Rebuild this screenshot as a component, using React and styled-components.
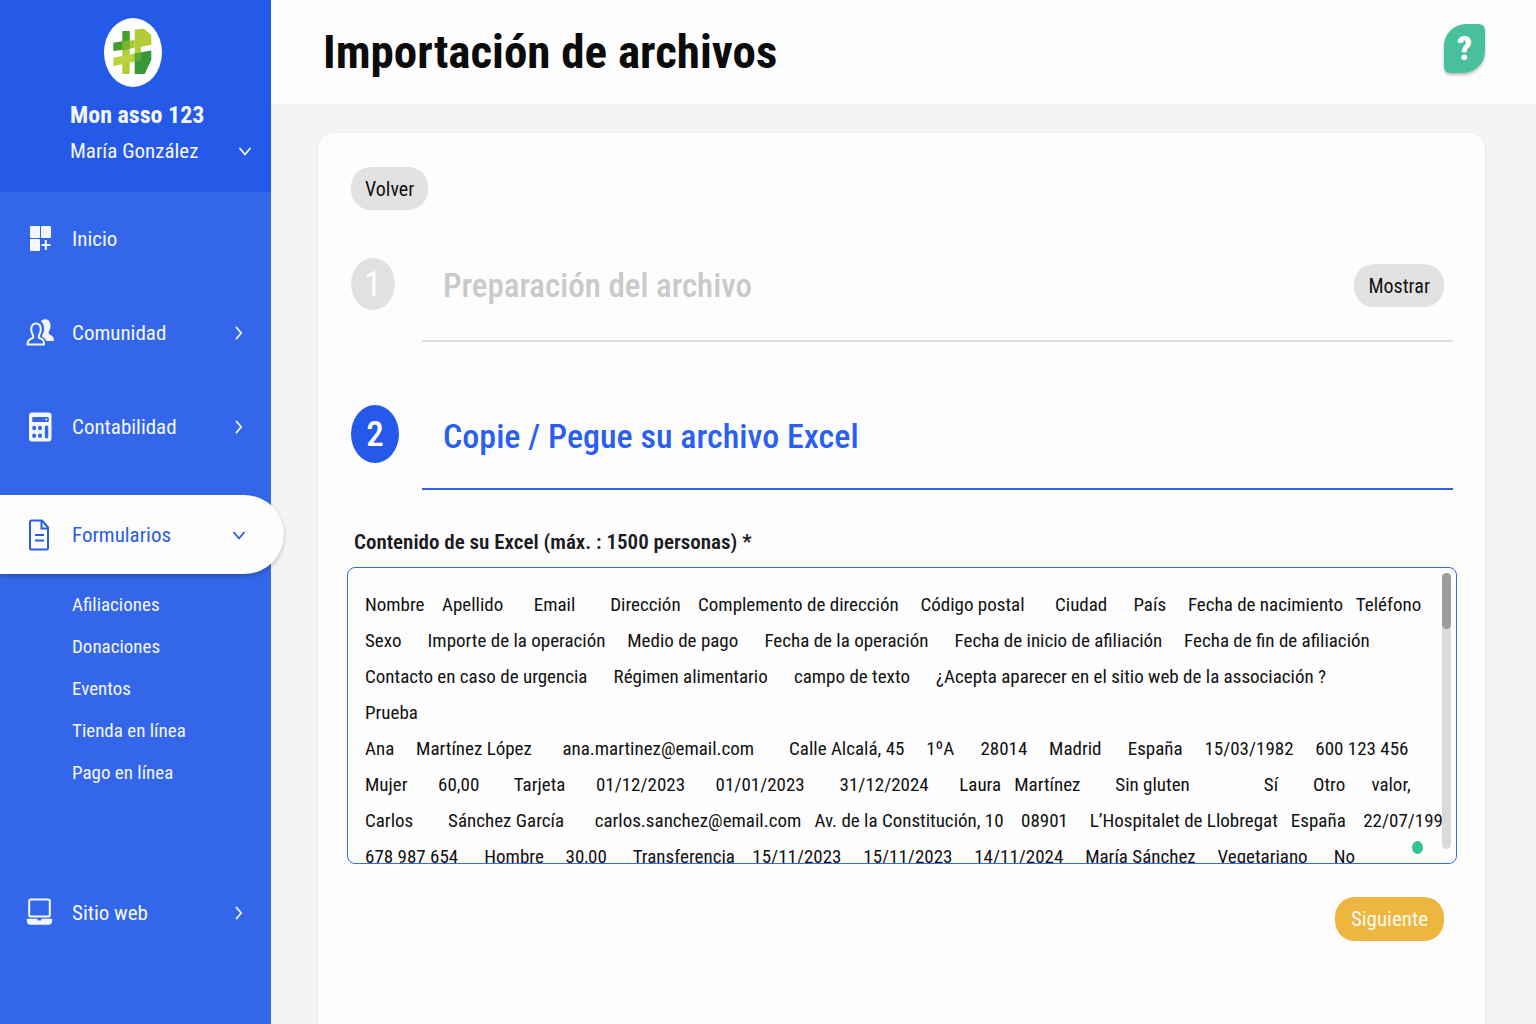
import React, { useState } from 'react'
import styled, { createGlobalStyle, css } from 'styled-components'

const GlobalStyle = createGlobalStyle`
  *, *::before, *::after {
    box-sizing: border-box;
  }
  body {
    margin: 0;
    background: #f4f4f4;
    color: #111;
    font-family: 'Roboto Condensed', Roboto, 'Liberation Sans', sans-serif;
    font-size: 19px;
  }
  button, textarea {
    font-family: inherit;
  }
`

const Page = styled.div`
  display: flex;
  min-height: 100vh;
`

const Sidebar = styled.aside`
  position: relative;
  z-index: 1;
  flex: 0 0 271px;
  background: #3366e8;
  color: #f4f7ff;
`

const Account = styled.div`
  display: flex;
  flex-direction: column;
  height: 192px;
  padding: 18px 19px 0 70px;
  background: #255ae8;
`

const Logo = styled.svg`
  display: block;
  width: 58px;
  height: 69px;
  margin-left: 34px;
`

const AssoName = styled.strong`
  margin-top: 12px;
  font-size: 24px;
  line-height: 32px;
`

const UserButton = styled.button`
  display: flex;
  align-items: center;
  justify-content: space-between;
  margin-top: 4px;
  padding: 0;
  border: 0;
  background: none;
  color: inherit;
  font-size: 21px;
  line-height: 32px;
  cursor: pointer;
`

const Nav = styled.nav`
  display: flex;
  flex-direction: column;
  gap: 15px;
  padding-top: 7px;
`

const NavGroup = styled.div`
  margin: 14px 0 64px;
`

const NavLink = styled.a`
  display: flex;
  align-items: center;
  gap: 18px;
  height: 79px;
  padding: 0 25px 0 26px;
  color: inherit;
  font-size: 21px;
  text-decoration: none;
  ${props => props.$active && css`
    margin-right: -13px;
    padding-right: 38px;
    border-radius: 0 40px 40px 0;
    background: #fdfdfd;
    color: #2a5ce8;
    box-shadow: 0 2px 4px rgba(0, 0, 0, 0.22);
  `}
`

const NavLabel = styled.span`
  flex: 1;
`

const NavIcon = styled.svg`
  width: 28px;
  height: 32px;
  fill: none;
  stroke: currentColor;
  stroke-width: 2;
`

const Chevron = styled.svg`
  width: 14px;
  height: 14px;
  fill: none;
  stroke: currentColor;
  stroke-width: 1.8;
  stroke-linecap: round;
  stroke-linejoin: round;
`

const SubNav = styled.div`
  display: flex;
  flex-direction: column;
  padding: 10px 0 0 72px;
`

const SubLink = styled.a`
  color: inherit;
  font-size: 19px;
  line-height: 42px;
  text-decoration: none;
`

const Main = styled.main`
  display: flex;
  flex: 1;
  flex-direction: column;
  min-width: 0;
`

const Header = styled.header`
  display: flex;
  align-items: center;
  justify-content: space-between;
  height: 104px;
  padding: 0 51px 0 52px;
  background: #fdfdfd;
`

const Title = styled.h1`
  margin: 0;
  color: #0b0b0b;
  font-size: 47px;
  line-height: 56px;
`

const HelpButton = styled.button`
  width: 41px;
  height: 49px;
  margin-bottom: 8px;
  padding: 0;
  border: 0;
  border-radius: 22px 6px 22px 6px;
  background: #48c09c;
  box-shadow: 0 2px 3px rgba(0, 0, 0, 0.25);
  color: #fff;
  font-size: 33px;
  font-weight: 900;
  cursor: pointer;
`

const Card = styled.section`
  flex: 1;
  margin: 29px 51px 0 47px;
  padding: 34px 28px 40px 29px;
  border-radius: 16px 16px 0 0;
  background: #fdfdfd;
  box-shadow: 0 1px 3px rgba(0, 0, 0, 0.12);
`

const Steps = styled.div`
  padding: 0 4px;
`

const Button = styled.button`
  height: ${props => (props.$primary ? 44 : 43)}px;
  padding: 0 ${props => (props.$primary ? 16 : 14)}px;
  border: 0;
  border-radius: 20px;
  background: ${props => (props.$primary ? '#edb63e' : '#e2e2e2')};
  color: ${props => (props.$primary ? '#fffaf0' : '#111')};
  font-size: ${props => (props.$primary ? 21 : 20)}px;
  cursor: pointer;
`

const Step = styled.div`
  display: flex;
  align-items: stretch;
  height: ${props => (props.$active ? 112 : 116)}px;
  margin-top: ${props => (props.$active ? 36 : 16)}px;
  color: ${props => (props.$active ? '#2b5fee' : '#c9c9c9')};
`

const StepMark = styled.div`
  display: flex;
  align-items: center;
  flex: 0 0 71px;
`

const StepNumber = styled.span`
  display: flex;
  align-items: center;
  justify-content: center;
  width: ${props => (props.$active ? 48 : 44)}px;
  height: ${props => (props.$active ? 58 : 52)}px;
  border-radius: 50%;
  background: ${props => (props.$active ? '#2459ea' : '#e1e1e1')};
  color: #fff;
  font-size: 35px;
  font-weight: ${props => (props.$active ? 500 : 400)};
`

const StepBody = styled.div`
  display: flex;
  flex: 1;
  align-items: center;
  justify-content: space-between;
  padding: 5px 9px 0 21px;
  border-bottom: 2px solid ${props => (props.$active ? '#2f62ea' : '#dedede')};
`

const StepTitle = styled.h2`
  margin: 0;
  font-size: ${props => (props.$active ? 34 : 33)}px;
  font-weight: 500;
`

const Label = styled.label`
  display: block;
  margin: 38px 0 11px 7px;
  color: #1b1b22;
  font-size: 21px;
  font-weight: 600;
  line-height: 28px;
`

const Field = styled.div`
  position: relative;
  display: flex;
  height: 297px;
  padding-right: 5px;
  border: 1px solid #3a69ec;
  border-radius: 8px;
  overflow: hidden;
`

const TextArea = styled.textarea`
  flex: 1;
  min-width: 0;
  padding: 19px 0 0 17px;
  border: 0;
  outline: 0;
  background: transparent;
  color: #111;
  font-size: 19px;
  line-height: 36px;
  white-space: pre;
  resize: none;
  overflow: hidden;
`

const ScrollTrack = styled.div`
  width: 9px;
  margin: 5px 0 14px;
  border-radius: 5px;
  background: #dadada;
`

const ScrollThumb = styled.div`
  height: 56px;
  border-radius: 5px;
  background: #9c9c9c;
`

const StatusDot = styled.span`
  position: absolute;
  right: 33px;
  bottom: 9px;
  width: 11px;
  height: 13px;
  border-radius: 50%;
  background: #37c193;
`

const Actions = styled.div`
  display: flex;
  justify-content: flex-end;
  margin-top: 33px;
  padding-right: 13px;
`

// Each row is a list of [spaces before, value]
const rows = [
  [[0, 'Nombre'], [4, 'Apellido'], [7, 'Email'], [8, 'Dirección'], [4, 'Complemento de dirección'], [5, 'Código postal'], [7, 'Ciudad'], [6, 'País'], [5, 'Fecha de nacimiento'], [3, 'Teléfono']],
  [[0, 'Sexo'], [6, 'Importe de la operación'], [5, 'Medio de pago'], [6, 'Fecha de la operación'], [6, 'Fecha de inicio de afiliación'], [5, 'Fecha de fin de afiliación']],
  [[0, 'Contacto en caso de urgencia'], [6, 'Régimen alimentario'], [6, 'campo de texto'], [6, '¿Acepta aparecer en el sitio web de la associación ?']],
  [[0, 'Prueba']],
  [[0, 'Ana'], [5, 'Martínez López'], [7, 'ana.martinez@email.com'], [8, 'Calle Alcalá, 45'], [5, '1ºA'], [6, '28014'], [5, 'Madrid'], [6, 'España'], [5, '15/03/1982'], [5, '600 123 456']],
  [[0, 'Mujer'], [7, '60,00'], [8, 'Tarjeta'], [7, '01/12/2023'], [7, '01/01/2023'], [8, '31/12/2024'], [7, 'Laura'], [3, 'Martínez'], [8, 'Sin gluten'], [17, 'Sí'], [8, 'Otro'], [6, 'valor,']],
  [[0, 'Carlos'], [8, 'Sánchez García'], [7, 'carlos.sanchez@email.com'], [3, 'Av. de la Constitución, 10'], [4, '08901'], [5, 'L’Hospitalet de Llobregat'], [3, 'España'], [4, '22/07/199']],
  [[0, '678 987 654'], [6, 'Hombre'], [5, '30,00'], [6, 'Transferencia'], [4, '15/11/2023'], [5, '15/11/2023'], [5, '14/11/2024'], [5, 'María Sánchez'], [5, 'Vegetariano'], [6, 'No']]
]

const initialContent = rows
  .map(row => row.map(([spaces, value]) => ' '.repeat(spaces) + value).join(''))
  .join('\n')

const ChevronDown = () =>
  <Chevron viewBox="0 0 14 14" aria-hidden="true">
    <path d="M2 4.500l5 6 5-6" />
  </Chevron>

const ChevronRight = () =>
  <Chevron viewBox="0 0 14 14" aria-hidden="true">
    <path d="M4.500 1.500l4.700 5.500-4.700 5.500" />
  </Chevron>

const HomeIcon = () =>
  <NavIcon viewBox="0 0 28 32" aria-hidden="true">
    <g fill="currentColor" stroke="none">
      <rect x="4" y="3" width="10" height="12" rx="1" />
      <rect x="15" y="3" width="10" height="12" rx="1" />
      <rect x="4" y="16" width="10" height="12" rx="1" />
    </g>
    <path d="M19.800 17v10M15.500 22h9" />
  </NavIcon>

const PeopleIcon = () =>
  <NavIcon viewBox="0 0 28 32" aria-hidden="true">
    <path
      fill="currentColor"
      stroke="none"
      d="M14.800 4.200C16 2.800 17.800 2.200 19.500 2.300c3.200.2 5 2.700 5 6 0 3-.6 4.700-1.700 6.400-.5 1.500.2 2.500 1.800 3.300 2.400 1.200 3.400 2.500 3.400 6h-7.800c-.5-1.800-1.800-3-4-4.200-.5-.4-.5-1 0-1.600 1.500-2.300 2-4.300 1.900-7.200-.1-3-1.200-5.300-3.300-6.800z"
    />
    <path
      strokeLinejoin="round"
      d="M1.500 27.500c0-3.500 1-4.800 4-6 2-.8 2.200-1.800 1.300-3.500-1-1.700-1.600-3.200-1.600-5.700C5.200 8.700 7 6.500 10 6.500s4.800 2.200 4.800 5.800c0 2.500-.6 4-1.600 5.700-.9 1.700-.7 2.700 1.300 3.500 3 1.200 3.500 2.500 3.500 6z"
    />
  </NavIcon>

const CalculatorIcon = () =>
  <NavIcon viewBox="0 0 28 32" aria-hidden="true">
    <path
      fill="currentColor"
      stroke="none"
      fillRule="evenodd"
      d="M6 1.500h16.500a3 3 0 0 1 3 3v23a3 3 0 0 1-3 3H6a3 3 0 0 1-3-3v-23a3 3 0 0 1 3-3zM7.200 6a1 1 0 0 0-1 1v3a1 1 0 0 0 1 1h14.600a1 1 0 0 0 1-1V7a1 1 0 0 0-1-1zM20.500 14.500a1.600 1.600 0 0 0-1.600 1.600v9.600a1.600 1.600 0 0 0 3.400 0v-9.600a1.600 1.600 0 0 0-1.800-1.600z"
    />
    <g fill="#3366e8" stroke="none">
      <ellipse cx="8.200" cy="17" rx="2" ry="2.200" />
      <ellipse cx="14" cy="17" rx="2" ry="2.200" />
      <ellipse cx="8.200" cy="24.800" rx="2" ry="2.200" />
      <ellipse cx="14" cy="24.800" rx="2" ry="2.200" />
    </g>
    <circle cx="20.300" cy="8.500" r="1" fill="currentColor" stroke="none" />
  </NavIcon>

const FormIcon = () =>
  <NavIcon viewBox="0 0 28 32" aria-hidden="true">
    <path strokeLinejoin="round" d="M5.500 1.500h10.500l6 7v20.500a1.500 1.500 0 0 1-1.500 1.500h-15A1.500 1.500 0 0 1 4 29V3a1.500 1.500 0 0 1 1.500-1.500z" />
    <path d="M15.500 1.500V9.500h6.500M9 16h9M9 21.500h9" />
  </NavIcon>

const LaptopIcon = () =>
  <NavIcon viewBox="0 0 28 32" aria-hidden="true">
    <rect x="3.200" y="2.500" width="20.600" height="17" rx="1.500" />
    <path
      fill="currentColor"
      stroke="none"
      d="M.8 21.800h10.700c0 1.300.5 1.800 1.300 1.800h1.400c.8 0 1.300-.5 1.300-1.800h10.700v1.400c0 3-1.200 4.600-3.600 4.600H4.400C2 27.800.8 26.200.8 23.200z"
    />
  </NavIcon>

const AssoLogo = () =>
  <Logo viewBox="0 0 58 69" role="img" aria-label="Mon asso 123">
    <ellipse cx="29" cy="34.500" rx="29" ry="34.500" fill="#fff" />
    <path fill="#b0cd38" d="M18.300 30h7.400v26h-7.400zM30.700 11.500l9.300-.7 7.300 6.200v9.700L37 28.800v8l-6.300 1.200z" />
    <path fill="#a6c936" d="M25.700 22.800l5-1v8l-5 1z" />
    <path fill="#b9d440" d="M9.300 39.700l21.400-4.200v8.300L9.300 47.900z" />
    <path fill="#429f2c" d="M18.300 13h7.400v18L9.300 33v-8.300l9-1.500z" />
    <path fill="#79b42e" d="M18.300 23.200l7.400-1.300V31l-7.400.9z" />
    <path fill="#38983a" d="M30.700 35.500l16.600-3V42l-6.600 14h-10z" />
    <path fill="#5dab33" d="M30.700 35.500l6.300-1.100v8.300l-6.300 1.100z" />
  </Logo>

const App = () => {
  const [content, setContent] = useState(initialContent)
  return (
    <Page>
      <GlobalStyle />
      <Sidebar>
        <Account>
          <AssoLogo />
          <AssoName>Mon asso 123</AssoName>
          <UserButton type="button">
            María González
            <ChevronDown />
          </UserButton>
        </Account>
        <Nav>
          <NavLink href="#inicio">
            <HomeIcon />
            <NavLabel>Inicio</NavLabel>
          </NavLink>
          <NavLink href="#comunidad">
            <PeopleIcon />
            <NavLabel>Comunidad</NavLabel>
            <ChevronRight />
          </NavLink>
          <NavLink href="#contabilidad">
            <CalculatorIcon />
            <NavLabel>Contabilidad</NavLabel>
            <ChevronRight />
          </NavLink>
          <NavGroup>
            <NavLink href="#formularios" $active>
              <FormIcon />
              <NavLabel>Formularios</NavLabel>
              <ChevronDown />
            </NavLink>
            <SubNav>
              <SubLink href="#afiliaciones">Afiliaciones</SubLink>
              <SubLink href="#donaciones">Donaciones</SubLink>
              <SubLink href="#eventos">Eventos</SubLink>
              <SubLink href="#tienda">Tienda en línea</SubLink>
              <SubLink href="#pago">Pago en línea</SubLink>
            </SubNav>
          </NavGroup>
          <NavLink href="#sitio-web">
            <LaptopIcon />
            <NavLabel>Sitio web</NavLabel>
            <ChevronRight />
          </NavLink>
        </Nav>
      </Sidebar>
      <Main>
        <Header>
          <Title>Importación de archivos</Title>
          <HelpButton type="button">?</HelpButton>
        </Header>
        <Card>
          <Steps>
            <Button type="button">Volver</Button>
            <Step>
              <StepMark>
                <StepNumber>1</StepNumber>
              </StepMark>
              <StepBody>
                <StepTitle>Preparación del archivo</StepTitle>
                <Button type="button">Mostrar</Button>
              </StepBody>
            </Step>
            <Step $active>
              <StepMark>
                <StepNumber $active>2</StepNumber>
              </StepMark>
              <StepBody $active>
                <StepTitle $active>Copie / Pegue su archivo Excel</StepTitle>
              </StepBody>
            </Step>
          </Steps>
          <Label htmlFor="excel">Contenido de su Excel (máx. : 1500 personas) *</Label>
          <Field>
            <TextArea
              id="excel"
              wrap="off"
              spellCheck="false"
              value={content}
              onChange={e => setContent(e.target.value)}
            />
            <ScrollTrack>
              <ScrollThumb />
            </ScrollTrack>
            <StatusDot />
          </Field>
          <Actions>
            <Button type="button" $primary>Siguiente</Button>
          </Actions>
        </Card>
      </Main>
    </Page>
  )
}

export default App
